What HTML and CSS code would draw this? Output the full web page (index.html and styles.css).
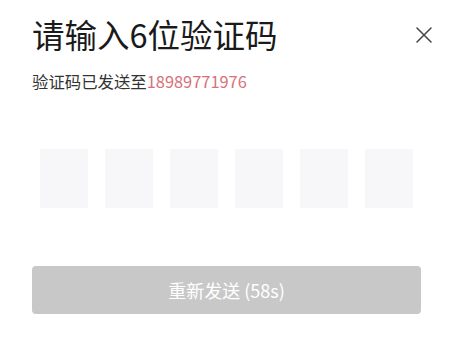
FILE: index.html
```html
<!DOCTYPE html>
<html lang="zh-CN">

<head>
  <meta charset="UTF-8">
  <meta name="viewport" content="width=device-width, initial-scale=1.0">
  <title>输入验证码</title>
  <link rel="stylesheet" href="styles.css">
</head>

<body>
  <div class="sheet">
    <div class="sheet-header">
      <h1 class="title">请输入6位验证码</h1>
      <button class="close-btn" aria-label="关闭">
        <svg width="16" height="16" viewBox="0 0 16 16">
          <path d="M1 1 L15 15 M15 1 L1 15" stroke="#444" stroke-width="1.5" fill="none" stroke-linecap="round" />
        </svg>
      </button>
    </div>
    <p class="hint">验证码已发送至<span class="phone">18989771976</span></p>

    <div class="code-boxes">
      <div class="code-box"></div>
      <div class="code-box"></div>
      <div class="code-box"></div>
      <div class="code-box"></div>
      <div class="code-box"></div>
      <div class="code-box"></div>
    </div>

    <button class="resend-btn" disabled>重新发送 (58s)</button>
  </div>
</body>

</html>
```

FILE: styles.css
```css
body {
  margin: 0;
  background: #fff;
  font-family: "Noto Sans CJK SC", "Noto Sans", sans-serif;
  color: #222;
}

.sheet {
  padding: 16px 28px 0 32px;
}

.sheet-header {
  display: flex;
  justify-content: space-between;
  align-items: flex-start;
}

.title {
  margin: 0;
  font-size: 32.5px;
  font-weight: 400;
  line-height: 36px;
  color: #1a1a1a;
}

.close-btn {
  margin: 11px -11px 0 0;
  padding: 0;
  width: 16px;
  height: 16px;
  border: none;
  background: none;
  cursor: pointer;
  display: flex;
}

.hint {
  margin: 18px 0 0;
  font-size: 16.4px;
  line-height: 22px;
  color: #333;
}

.phone {
  color: #d8707a;
}

.code-boxes {
  display: grid;
  grid-template-columns: repeat(6, 48px);
  justify-content: center;
  gap: 17px;
  margin-top: 57px;
}

.code-box {
  height: 59px;
  background: #f7f7f9;
}

.resend-btn {
  display: block;
  width: 100%;
  height: 48px;
  margin-top: 58px;
  border: none;
  border-radius: 4px;
  background: #c8c8c8;
  color: #fff;
  font-family: inherit;
  font-size: 18px;
}
```
